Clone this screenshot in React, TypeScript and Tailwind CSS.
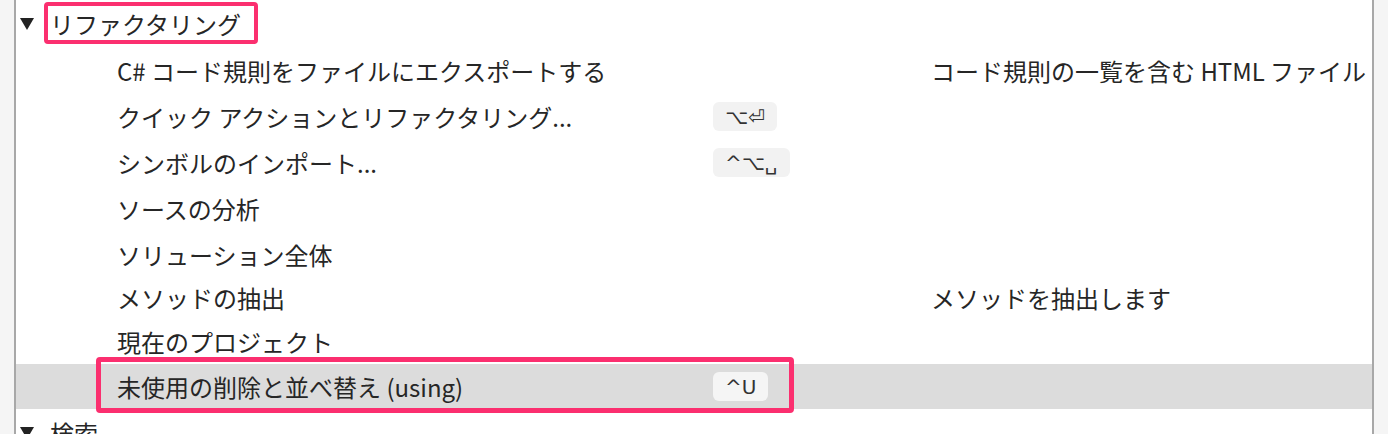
const rows = [
  { label: 'C# コード規則をファイルにエクスポートする', keys: '', desc: 'コード規則の一覧を含む HTML ファイル', h: 'h-[47px]' },
  { label: 'クイック アクションとリファクタリング...', keys: '⌥⏎', desc: '', h: 'h-[45px]' },
  { label: 'シンボルのインポート...', keys: '^⌥␣', desc: '', h: 'h-[47px]' },
  { label: 'ソースの分析', keys: '', desc: '', h: 'h-[46px]' },
  { label: 'ソリューション全体', keys: '', desc: '', h: 'h-[45px]' },
  { label: 'メソッドの抽出', keys: '', desc: 'メソッドを抽出します', h: 'h-[42px]' },
  { label: '現在のプロジェクト', keys: '', desc: '', h: 'h-[45px]' },
];

function Triangle() {
  return (
    <svg width="14" height="12" viewBox="0 0 14 12" className="shrink-0">
      <path d="M0 0 L14 0 L7 12 Z" fill="#222" />
    </svg>
  );
}

function KeyCap({ keys, light }: { keys: string; light?: boolean }) {
  return (
    <span
      className={`inline-flex h-[29px] items-center rounded-md px-[12px] text-[20px] leading-none text-[#333] ${light ? 'bg-[#f5f5f5]' : 'bg-[#f2f2f2]'}`}
      style={{ fontFamily: '"DejaVu Sans", sans-serif' }}
    >
      {keys}
    </span>
  );
}

export default function App() {
  return (
    <div
      className="flex h-[434px] w-[1388px] overflow-hidden bg-white text-[24px] text-[#262626]"
      style={{ fontFamily: '"Noto Sans CJK JP", "Noto Sans", sans-serif' }}
    >
      <div className="w-[14px] shrink-0 bg-[#f5f5f5]" />
      <div className="w-[2px] shrink-0 bg-[#a8a8a8]" />

      <div className="flex w-[1356px] shrink-0 flex-col">
        {/* Refactoring group */}
        <div className="relative flex h-[47px] shrink-0 items-center pl-[4px]">
          <Triangle />
          <span className="ml-[16px] leading-normal">リファクタリング</span>
          <div className="absolute left-[28px] top-[2px] h-[42px] w-[214px] rounded-[4px] border-[4px] border-[#fb2f6f]" />
        </div>

        {rows.map((r) => (
          <div key={r.label} className={`flex shrink-0 items-center ${r.h}`}>
            <span className="w-[697px] shrink-0 whitespace-nowrap pl-[101px] leading-normal">{r.label}</span>
            <div className="flex w-[218px] shrink-0">{r.keys && <KeyCap keys={r.keys} />}</div>
            <span className="min-w-0 flex-1 overflow-hidden whitespace-nowrap leading-normal">{r.desc}</span>
          </div>
        ))}

        {/* Selected row */}
        <div className="relative flex h-[45px] shrink-0 items-center bg-[#dcdcdc]">
          <span className="w-[697px] shrink-0 whitespace-nowrap pl-[101px] leading-normal">未使用の削除と並べ替え (using)</span>
          <div className="flex w-[218px] shrink-0">
            <KeyCap keys="^U" light />
          </div>
          <div className="absolute left-[80px] top-[-7px] h-[56px] w-[698px] rounded-[4px] border-[5px] border-[#fb2f6f]" />
        </div>

        {/* Search group */}
        <div className="flex h-[47px] shrink-0 items-center pl-[4px]">
          <Triangle />
          <span className="ml-[16px] leading-normal">検索</span>
        </div>
      </div>

      <div className="w-[2px] shrink-0 bg-[#a8a8a8]" />
      <div className="flex-1 bg-[#f5f5f5]" />
    </div>
  );
}
